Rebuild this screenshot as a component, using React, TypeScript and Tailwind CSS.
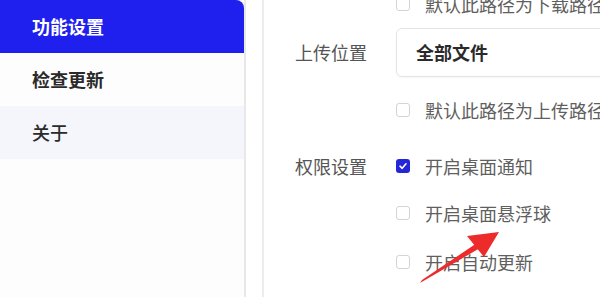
import React from "react";

function Box({ checked = false }: { checked?: boolean }) {
  return checked ? (
    <span className="w-[14px] h-[14px] rounded-[3px] bg-[#2626d9] flex items-center justify-center shrink-0">
      <svg width="10" height="10" viewBox="0 0 10 10">
        <path d="M2 5.2 L4.2 7.3 L8 2.8" stroke="white" strokeWidth="1.6" fill="none" strokeLinecap="round" strokeLinejoin="round" />
      </svg>
    </span>
  ) : (
    <span className="w-[14px] h-[14px] rounded-[3px] border border-[#d4d4d4] bg-white shrink-0" />
  );
}

function CheckRow({ text, checked, className }: { text: string; checked?: boolean; className?: string }) {
  return (
    <div className={"h-[24px] flex items-center gap-[15px] whitespace-nowrap " + (className ?? "")}>
      <Box checked={checked} />
      <span className="text-[18px] text-[#5f5f5f] leading-none">{text}</span>
    </div>
  );
}

export default function App() {
  return (
    <div
      className="w-[600px] h-[297px] overflow-hidden flex bg-white relative"
      style={{ fontFamily: '"Noto Sans CJK SC", "Noto Sans", sans-serif' }}
    >
      <aside className="w-[246px] shrink-0 border-r-2 border-[#e8e8e8] flex flex-col bg-[#fdfdfd]">
        <div className="h-[53px] bg-[#2020ee] rounded-tr-[8px] flex items-center pl-[32px] text-white text-[18px] font-bold">
          功能设置
        </div>
        <div className="h-[53px] flex items-center pl-[32px] text-[#2a2a2a] text-[18px] font-bold">
          检查更新
        </div>
        <div className="h-[53px] bg-[#f5f5fc] flex items-center pl-[32px] text-[#2a2a2a] text-[18px] font-medium">
          关于
        </div>
      </aside>
      <div className="w-[16px] shrink-0" />
      <main className="flex-1 border-l-2 border-[#ececec] flex overflow-hidden">
        <div className="w-[132px] shrink-0 flex flex-col pl-[31px] text-[18px] text-[#555]">
          <div className="h-[49px] mt-[28px] flex items-center">上传位置</div>
          <div className="h-[24px] mt-[77px] flex items-center">权限设置</div>
        </div>
        <div className="flex-1 flex flex-col -mt-[8px] min-w-0">
          <CheckRow text="默认此路径为下载路径" />
          <div className="h-[49px] mt-[12px] w-[260px] border border-[#e4e4e4] rounded-[6px] flex items-center pl-[19px] text-[18px] font-bold text-[#2a2a2a] whitespace-nowrap shadow-[0_1px_2px_rgba(0,0,0,0.04)]">
            全部文件
          </div>
          <CheckRow text="默认此路径为上传路径" className="mt-[21px]" />
          <CheckRow text="开启桌面通知" checked className="mt-[32px]" />
          <CheckRow text="开启桌面悬浮球" className="mt-[23px]" />
          <CheckRow text="开启自动更新" className="mt-[25px]" />
        </div>
      </main>
      <svg className="absolute left-0 top-0 pointer-events-none" width="600" height="297">
        <polygon points="420,283 422,280 477,243 480,248" fill="#ee2b2b" />
        <polygon points="499,232 467,236 484,257" fill="#ee2b2b" />
      </svg>
    </div>
  );
}
